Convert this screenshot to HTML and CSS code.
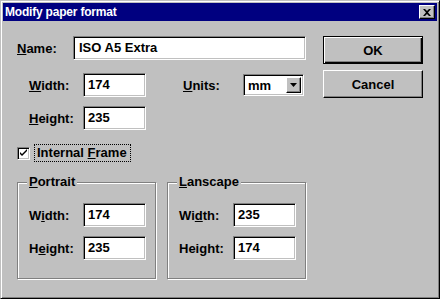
FILE: index.html
```html
<!DOCTYPE html>
<html lang="en">
<head>
    <meta charset="UTF-8">
    <title>Modify paper format</title>
    <link rel="stylesheet" href="styles.css">
</head>
<body>
    <div class="window">
        <div class="titlebar">
            <span class="title">Modify paper format</span>
            <span class="close-btn">
                <svg width="8" height="7" viewBox="0 0 8 7"><path d="M0 0h2l2 2 2-2h2L5 3.5 8 7H6L4 5 2 7H0l3-3.5z" fill="#000"/></svg>
            </span>
        </div>

        <div class="client">
            <div class="fields">
                <div class="row row-name">
                    <span class="lbl lbl-name"><u>N</u>ame:</span>
                    <span class="edit edit-name">ISO A5 Extra</span>
                </div>

                <div class="row row-size">
                    <span class="lbl lbl-size"><u>W</u>idth:</span>
                    <span class="edit edit-num">174</span>
                    <span class="lbl lbl-units"><u>U</u>nits:</span>
                    <span class="combo">
                        <span class="combo-text">mm</span>
                        <span class="combo-btn">
                            <svg width="7" height="4" viewBox="0 0 7 4"><path d="M0 0h7L3.5 4z" fill="#000"/></svg>
                        </span>
                    </span>
                </div>

                <div class="row row-size row-height">
                    <span class="lbl lbl-size"><u>H</u>eight:</span>
                    <span class="edit edit-num">235</span>
                </div>

                <div class="row row-check">
                    <span class="checkbox">
                        <svg width="9" height="9" viewBox="0 0 9 9"><path d="M1 3v2l2 2 5-5V0L3 5z" fill="#000"/></svg>
                    </span>
                    <span class="check-label">Internal <u>F</u>rame</span>
                </div>

                <div class="groups">
                    <div class="group">
                        <span class="group-title"><u>P</u>ortrait</span>
                        <div class="group-row">
                            <span class="lbl lbl-group">W<u>i</u>dth:</span>
                            <span class="edit edit-num">174</span>
                        </div>
                        <div class="group-row">
                            <span class="lbl lbl-group">H<u>e</u>ight:</span>
                            <span class="edit edit-num">235</span>
                        </div>
                    </div>
                    <div class="group">
                        <span class="group-title"><u>L</u>anscape</span>
                        <div class="group-row">
                            <span class="lbl lbl-group">Wi<u>d</u>th:</span>
                            <span class="edit edit-num">235</span>
                        </div>
                        <div class="group-row">
                            <span class="lbl lbl-group">Hei<u>g</u>ht:</span>
                            <span class="edit edit-num">174</span>
                        </div>
                    </div>
                </div>
            </div>

            <div class="buttons">
                <span class="btn btn-default">OK</span>
                <span class="btn">Cancel</span>
            </div>
        </div>
    </div>
</body>
</html>
```

FILE: styles.css
```css
* {
    margin: 0;
    padding: 0;
    box-sizing: border-box;
}

body {
    font-family: "Liberation Sans", Arial, sans-serif;
    font-size: 13px;
    font-weight: bold;
    color: #000;
    background: #c0c0c0;
}

u {
    text-decoration: underline;
    text-underline-offset: 1px;
}

.window {
    width: 440px;
    height: 299px;
    background: #c0c0c0;
    border: 1px solid;
    border-color: #c0c0c0 #000 #000 #c0c0c0;
    box-shadow: inset 1px 1px #fff, inset -1px -1px #808080;
    padding: 2px;
}

/* title bar */
.titlebar {
    height: 18px;
    background: #000080;
    display: flex;
    align-items: center;
    justify-content: space-between;
    padding: 0 2px;
}

.title {
    color: #fff;
    font-size: 12px;
    letter-spacing: -0.2px;
    line-height: 18px;
}

.close-btn {
    width: 16px;
    height: 14px;
    display: flex;
    align-items: center;
    justify-content: center;
    background: #c0c0c0;
    border: 1px solid;
    border-color: #fff #000 #000 #fff;
    box-shadow: inset -1px -1px #808080;
}

.close-btn svg {
    display: block;
}

/* client area */
.client {
    display: flex;
    padding: 15px 0 0 14px;
}

.fields {
    width: 306px;
}

.row {
    display: flex;
    align-items: center;
    height: 24px;
}

.row-size {
    margin-top: 13px;
}

.row-height {
    margin-top: 9px;
}

.lbl {
    white-space: nowrap;
}

.lbl-name {
    width: 56px;
}

.lbl-size {
    width: 66px;
    padding-left: 12px;
}

.lbl-units {
    width: 60px;
    margin-left: 37px;
}

/* sunken edit boxes */
.edit {
    display: block;
    height: 24px;
    line-height: 22px;
    background: #fff;
    border: 1px solid;
    border-color: #808080 #fff #fff #808080;
    box-shadow: inset 1px 1px #000, inset -1px -1px #c0c0c0;
    padding-left: 4px;
    white-space: nowrap;
}

.edit-name {
    width: 233px;
    padding-left: 5px;
}

.edit-num {
    width: 63px;
}

.combo {
    display: flex;
    align-items: center;
    width: 61px;
    height: 22px;
    background: #fff;
    border: 1px solid;
    border-color: #808080 #fff #fff #808080;
    box-shadow: inset 1px 1px #000, inset -1px -1px #c0c0c0;
    padding: 2px 2px 2px 4px;
}

.combo-text {
    flex: 1;
}

.combo-btn {
    width: 15px;
    height: 16px;
    display: flex;
    align-items: center;
    justify-content: center;
    background: #c0c0c0;
    border: 1px solid;
    border-color: #fff #000 #000 #fff;
    box-shadow: inset -1px -1px #808080;
}

/* checkbox */
.row-check {
    margin-top: 14px;
    height: 18px;
}

.checkbox {
    width: 13px;
    height: 13px;
    display: flex;
    align-items: center;
    justify-content: center;
    background: #fff;
    border: 1px solid;
    border-color: #808080 #fff #fff #808080;
    box-shadow: inset 1px 1px #000, inset -1px -1px #c0c0c0;
}

.check-label {
    margin-left: 4px;
    height: 18px;
    line-height: 16px;
    padding: 0 3px 0 2px;
    border: 1px dotted #000;
}

/* group boxes */
.groups {
    display: flex;
    gap: 11px;
    margin-top: 20px;
}

.group {
    width: 139px;
    height: 97px;
    border: 1px solid #808080;
    box-shadow: inset 1px 1px #fff, 1px 1px #fff;
    padding-left: 11px;
}

.group-title {
    display: inline-block;
    margin: -9px 0 0 -2px;
    padding: 0 2px;
    line-height: 16px;
    background: #c0c0c0;
    vertical-align: top;
}

.group-row {
    display: flex;
    align-items: center;
    height: 24px;
    margin-bottom: 9px;
}

.group-title + .group-row {
    margin-top: 5px;
}

.lbl-group {
    width: 54px;
}

/* push buttons */
.buttons {
    display: flex;
    flex-direction: column;
    gap: 6px;
}

.btn {
    width: 100px;
    height: 28px;
    display: flex;
    align-items: center;
    justify-content: center;
    border: 1px solid;
    border-color: #fff #000 #000 #fff;
    box-shadow: inset -1px -1px #808080;
}

.btn-default {
    border: 1px solid #000;
    box-shadow: inset 1px 1px #fff, inset -1px -1px #000, inset -2px -2px #808080;
}
```
